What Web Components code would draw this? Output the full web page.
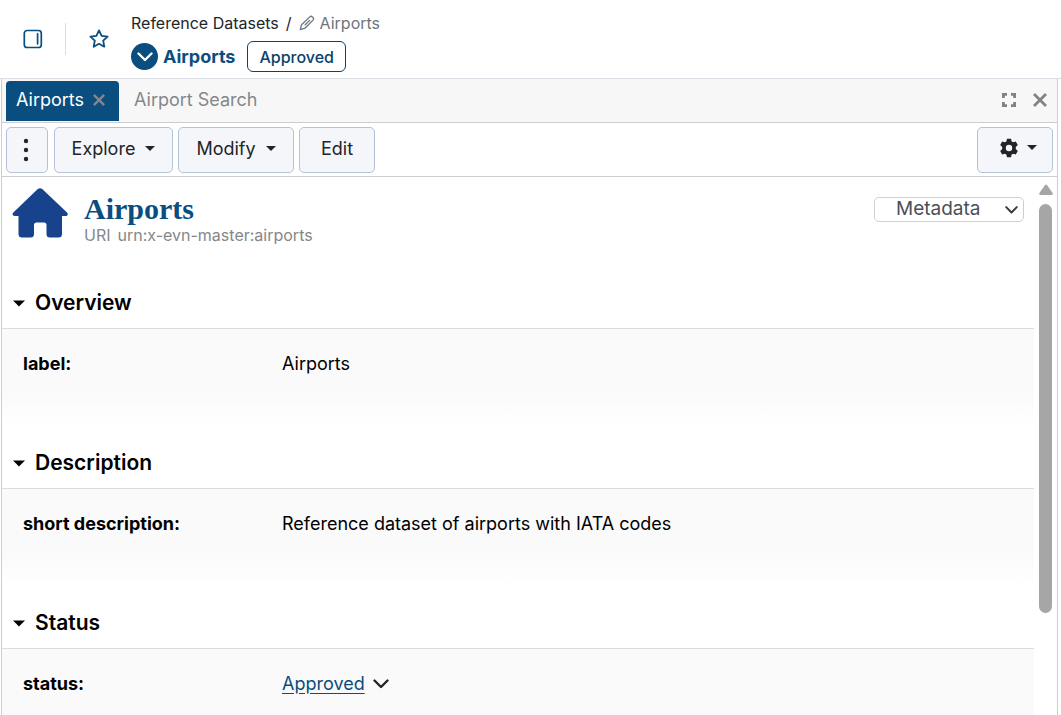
<!DOCTYPE html>
<html lang="en">
<head>
<meta charset="utf-8">
<meta name="viewport" content="width=device-width, initial-scale=1">
<title>Airports</title>
<style>
  html, body {
    height: 100%;
    margin: 0;
  }
  body {
    font-family: Inter, "Open Sans", sans-serif;
    color: #212529;
    background: white;
    overflow: hidden;
    --brand: #0a4d7f;
    --line: #ccced0;
  }
</style>
</head>
<body>
<asset-app></asset-app>

<script>
// Line and solid icons used across the page
const ICONS = {
  panel: '<svg viewBox="0 0 20 20" width="20" height="20" fill="none" stroke="currentColor" stroke-width="1.7"><rect x="1.3" y="1.5" width="17" height="17" rx="2.8"/><path d="M14.6 4.8v10" stroke-linecap="round"/></svg>',
  star: '<svg viewBox="0 0 20 20" width="20" height="20" fill="none" stroke="currentColor" stroke-width="1.8" stroke-linejoin="round"><path d="M10 1.4l2.6 5.4 6 .8-4.4 4.100 1.100 6L10 14.800l-5.300 2.900 1.100-6L1.400 7.600l6-.8z"/></svg>',
  pencil: '<svg viewBox="0 0 16 16" width="16" height="16" fill="none" stroke="currentColor" stroke-width="1.3" stroke-linejoin="round" stroke-linecap="round"><path d="M1.300 14.700l1.200-5L10.800 1.900q1.300-1.200 2.600 0l.6.6q1.200 1.200 0 2.600L6 13.200zM10.600 5.400L6.200 9.800"/></svg>',
  chevron: '<svg viewBox="0 0 16 10" width="16" height="10" fill="none" stroke="currentColor" stroke-width="2.4" stroke-linecap="round" stroke-linejoin="round"><path d="M1.500 1.500L8 8l6.500-6.500"/></svg>',
  caret: '<svg viewBox="0 0 10 5" width="10" height="5" fill="currentColor"><path d="M0 0h10L5 5z"/></svg>',
  close: '<svg viewBox="0 0 14 14" width="14" height="14" fill="none" stroke="currentColor" stroke-width="2.8"><path d="M1 1l12 12M13 1L1 13"/></svg>',
  expand: '<svg viewBox="0 0 14 14" width="14" height="14" fill="none" stroke="currentColor" stroke-width="2.800"><path d="M1.400 5V1.400H5M9 1.400h3.600V5M12.600 9v3.600H9M5 12.600H1.400V9"/></svg>',
  dots: '<svg viewBox="0 0 6 24" width="6" height="24" fill="currentColor"><circle cx="3" cy="3" r="2.200"/><circle cx="3" cy="12" r="2.200"/><circle cx="3" cy="21" r="2.200"/></svg>',
  gear: '<svg viewBox="0 0 24 24" width="22" height="22" fill="currentColor"><path fill-rule="evenodd" d="M9.800 2h4.400l.7 2.900 1.600.9 2.900-.9 2.200 3.800-2.200 2.100v2.400l2.200 2.100-2.200 3.800-2.900-.9-1.600.9-.7 2.900H9.800l-.7-2.900-1.600-.9-2.900.9-2.200-3.800 2.200-2.100v-2.400L2.400 8.700l2.200-3.800 2.900.9 1.600-.9zM12 8.500a3.500 3.500 0 1 0 0 7 3.500 3.500 0 0 0 0-7z"/></svg>',
  house: '<svg viewBox="0 0 56 50" width="56" height="50" fill="#17428c"><path d="M25.500 1.200q2.500-2 5 0L55 24.500q1.500 1.800.2 3-1 .8-2.700.5H50v18q0 3.500-3.500 3.500H38q-3.500 0-3.500-3.500v-9q0-2.500-2.500-2.500h-7.500q-2.500 0-2.500 2.500v9q0 3.500-3.500 3.500h-8.500Q6.500 49.500 6.500 46V28H3.500Q1 28 .6 26.500q-.3-1.200 1-2.300z"/></svg>'
};

// Shared reset for controls in each shadow root
const BASE = `
  * { box-sizing: border-box; }
  svg { display: block; flex: none; }
  button, select {
    font: inherit;
    color: inherit;
    margin: 0;
    padding: 0;
    border: 0;
    background: none;
    cursor: pointer;
  }
  a { color: inherit; text-decoration: none; }
`;

class AssetHeader extends HTMLElement {
  constructor() {
    super();
    this.attachShadow({ mode: 'open' });
  }

  connectedCallback() {
    this.shadowRoot.innerHTML = `
      <style>
        ${BASE}
        :host {
          display: flex;
          align-items: center;
          flex: none;
          height: 79px;
          padding-left: 23px;
          border-bottom: 1px solid #dadfe6;
          box-sizing: border-box;
          color: var(--brand);
          font-size: 16px;
          line-height: 20px;
        }
        .divider {
          width: 1px;
          height: 32px;
          margin: 0 23px 0 22px;
          background: #dcdfe2;
        }
        .titles {
          margin-left: 22px;
          padding-top: 7px;
        }
        .crumbs, .name {
          display: flex;
          align-items: center;
        }
        .crumbs {
          gap: 7px;
          color: #212529;
          margin-bottom: 8px;
        }
        .here {
          display: flex;
          align-items: center;
          gap: 5px;
          color: #6c757d;
        }
        .name strong {
          font-size: 18px;
          font-weight: 700;
          margin: 0 12px 0 5px;
        }
        .menu {
          display: grid;
          place-items: center;
          width: 27px;
          height: 27px;
          border-radius: 50%;
          color: white;
          background: var(--brand);
        }
        .status {
          height: 31px;
          padding: 0 11px;
          border: 1px solid #0b416b;
          border-radius: 6px;
          font-weight: 500;
          color: #0b416b;
        }
      </style>
      <button aria-label="Toggle panel">${ICONS.panel}</button>
      <div class="divider"></div>
      <button aria-label="Favorite">${ICONS.star}</button>
      <div class="titles">
        <nav class="crumbs">
          <a href="#datasets">Reference Datasets</a>
          <span>/</span>
          <span class="here">${ICONS.pencil}<span>Airports</span></span>
        </nav>
        <div class="name">
          <button class="menu" aria-label="Open menu">${ICONS.chevron}</button>
          <strong>Airports</strong>
          <button class="status">Approved</button>
        </div>
      </div>
    `;
  }
}

class PanelTabs extends HTMLElement {
  constructor() {
    super();
    this.attachShadow({ mode: 'open' });
  }

  connectedCallback() {
    this.shadowRoot.innerHTML = `
      <style>
        ${BASE}
        :host {
          display: flex;
          align-items: stretch;
          flex: none;
          height: 44px;
          padding: 2px 10px 1px 4px;
          border-bottom: 1px solid var(--line);
          box-sizing: border-box;
          background: #f7f7f7;
          color: #85878a;
          font-size: 18px;
          line-height: 24px;
        }
        .tab {
          display: flex;
          align-items: center;
          gap: 9px;
          padding: 0 14px 2px 10px;
          margin-right: 15px;
          border-radius: 4px 4px 0 0;
          background: var(--brand);
        }
        .tab > :first-child {
          color: white;
        }
        .tab svg {
          width: 12px;
          height: 12px;
        }
        .plain {
          padding-bottom: 2px;
        }
        .tools {
          display: flex;
          align-items: center;
          gap: 17px;
          margin-left: auto;
          padding-bottom: 2px;
          color: #808285;
        }
      </style>
      <div class="tab">
        <button>Airports</button>
        <button aria-label="Close tab">${ICONS.close}</button>
      </div>
      <button class="plain">Airport Search</button>
      <div class="tools">
        <button aria-label="Maximize">${ICONS.expand}</button>
        <button aria-label="Close panel">${ICONS.close}</button>
      </div>
    `;
  }
}

// Bordered toolbar button, with a caret when the "menu" attribute is set
class ToolButton extends HTMLElement {
  constructor() {
    super();
    this.attachShadow({ mode: 'open' });
  }

  connectedCallback() {
    const label = this.getAttribute('label');
    this.shadowRoot.innerHTML = `
      <style>
        ${BASE}
        :host {
          display: block;
        }
        button {
          display: flex;
          align-items: center;
          justify-content: center;
          gap: 10px;
          width: 100%;
          height: 46px;
          padding: 0 16px 2px;
          border: 1px solid #b4c0dc;
          border-radius: 5px;
          background: #f5f6fa;
          color: #212529;
          font-size: 18px;
        }
        :host([icon]) button {
          padding: 0 2px 0 0;
          gap: 7px;
        }
        :host([icon][menu]) button {
          padding: 0 0 4px 4px;
        }
      </style>
      <button ${label ? `aria-label="${label}"` : ''}>
        ${this.hasAttribute('icon') ? ICONS[this.getAttribute('icon')] : '<slot></slot>'}
        ${this.hasAttribute('menu') ? ICONS.caret : ''}
      </button>
    `;
  }
}

class PanelToolbar extends HTMLElement {
  constructor() {
    super();
    this.attachShadow({ mode: 'open' });
  }

  connectedCallback() {
    this.shadowRoot.innerHTML = `
      <style>
        :host {
          display: flex;
          align-items: center;
          gap: 5px;
          flex: none;
          height: 54px;
          padding: 0 4px;
          border-bottom: 1px solid var(--line);
          box-sizing: border-box;
        }
        .more { width: 42px; margin-right: 1px; }
        .explore { width: 119px; }
        .modify { width: 116px; }
        .edit { width: 76px; }
        .settings { width: 76px; margin-left: auto; }
      </style>
      <tool-button class="more" icon="dots" label="More"></tool-button>
      <tool-button class="explore" menu>Explore</tool-button>
      <tool-button class="modify" menu>Modify</tool-button>
      <tool-button class="edit">Edit</tool-button>
      <tool-button class="settings" icon="gear" label="Settings" menu></tool-button>
    `;
  }
}

class ResourceTitle extends HTMLElement {
  constructor() {
    super();
    this.attachShadow({ mode: 'open' });
  }

  connectedCallback() {
    this.shadowRoot.innerHTML = `
      <style>
        ${BASE}
        :host {
          display: flex;
          align-items: flex-start;
          height: 99px;
          padding: 11px 10px 0;
          box-sizing: border-box;
        }
        .text {
          margin: 4px 0 0 16px;
        }
        h1 {
          margin: 0;
          font-family: "Liberation Serif", serif;
          font-size: 30px;
          line-height: 33px;
          font-weight: 700;
          color: var(--brand);
        }
        p {
          display: flex;
          gap: 7px;
          margin: 0;
          font-size: 16px;
          line-height: 20px;
          color: #85878a;
        }
        .view {
          position: relative;
          display: flex;
          align-items: center;
          width: 150px;
          margin: 9px 0 0 auto;
        }
        select {
          appearance: none;
          width: 100%;
          height: 25px;
          padding: 0 30px 2px 21px;
          border: 1px solid #cbd0d8;
          border-radius: 5px;
          background: white;
          color: #495057;
          font-size: 19px;
          line-height: 22px;
        }
        .view svg {
          position: absolute;
          right: 6px;
          width: 13px;
          color: #343a40;
          pointer-events: none;
        }
      </style>
      ${ICONS.house}
      <div class="text">
        <h1>Airports</h1>
        <p><span>URI</span><span>urn:x-evn-master:airports</span></p>
      </div>
      <div class="view">
        <select aria-label="View">
          <option>Metadata</option>
        </select>
        ${ICONS.chevron}
      </div>
    `;
  }
}

class PropertySection extends HTMLElement {
  constructor() {
    super();
    this.attachShadow({ mode: 'open' });
  }

  connectedCallback() {
    this.shadowRoot.innerHTML = `
      <style>
        ${BASE}
        :host {
          display: block;
          font-size: 18px;
          line-height: 24px;
          color: black;
        }
        h2 {
          margin: 0;
          font-size: 21px;
          font-weight: 600;
        }
        h2 button {
          display: flex;
          align-items: center;
          gap: 10px;
          width: 100%;
          height: 52px;
          padding: 2px 0 0 11px;
        }
        h2 svg {
          width: 12px;
          height: 7px;
        }
        dl {
          display: grid;
          grid-template-columns: 259px 1fr;
          align-items: start;
          height: 108px;
          margin: 0;
          padding: 23px 21px 0;
          border-top: 1px solid #d9dbdd;
          background: linear-gradient(#fafafa 62%, white 92%);
        }
        dt {
          font-weight: 700;
        }
        dd {
          margin: 0;
        }
      </style>
      <h2><button aria-expanded="true">${ICONS.caret}${this.getAttribute('heading')}</button></h2>
      <dl>
        <dt>${this.getAttribute('property')}:</dt>
        <dd><slot></slot></dd>
      </dl>
    `;
  }
}

class StatusValue extends HTMLElement {
  constructor() {
    super();
    this.attachShadow({ mode: 'open' });
  }

  connectedCallback() {
    this.shadowRoot.innerHTML = `
      <style>
        ${BASE}
        :host {
          display: flex;
          align-items: center;
          gap: 8px;
        }
        a {
          color: var(--brand);
          text-decoration: underline;
          text-underline-offset: 3px;
        }
        button { color: #212529; }
      </style>
      <a href="#status"><slot></slot></a>
      <button aria-label="Change status">${ICONS.chevron}</button>
    `;
  }
}

class ScrollPane extends HTMLElement {
  constructor() {
    super();
    this.attachShadow({ mode: 'open' });
  }

  connectedCallback() {
    this.shadowRoot.innerHTML = `
      <style>
        :host {
          display: flex;
          flex: 1;
          min-height: 0;
        }
        .content {
          flex: 1;
          min-width: 0;
          overflow-y: auto;
          scrollbar-width: none;
        }
        .bar {
          display: flex;
          flex-direction: column;
          align-items: center;
          gap: 9px;
          flex: none;
          width: 23px;
          padding-top: 7px;
          box-sizing: border-box;
        }
        svg { display: block; flex: none; }
        .thumb {
          width: 13px;
          height: 77%;
          border-radius: 7px;
          background: #a6a6a6;
        }
      </style>
      <div class="content"><slot></slot></div>
      <div class="bar">
        <svg viewBox="0 0 14 11" width="14" height="11"><path d="M6 1q1-1.200 2 0l5.600 8q.6 2-1 2H1.400q-1.600 0-1-2z" fill="#a6a6a6"/></svg>
        <div class="thumb"></div>
      </div>
    `;
  }
}

class AssetApp extends HTMLElement {
  constructor() {
    super();
    this.attachShadow({ mode: 'open' });
  }

  connectedCallback() {
    this.shadowRoot.innerHTML = `
      <style>
        :host {
          display: flex;
          flex-direction: column;
          height: 100vh;
        }
        main {
          display: flex;
          flex-direction: column;
          flex: 1;
          min-height: 0;
          margin: 0 3px 0 1px;
          border: solid var(--line);
          border-width: 0 1px;
        }
      </style>
      <asset-header></asset-header>
      <main>
        <panel-tabs></panel-tabs>
        <panel-toolbar></panel-toolbar>
        <scroll-pane>
          <resource-title></resource-title>
          <property-section heading="Overview" property="label">Airports</property-section>
          <property-section heading="Description" property="short description">Reference dataset of airports with IATA codes</property-section>
          <property-section heading="Status" property="status"><status-value>Approved</status-value></property-section>
        </scroll-pane>
      </main>
    `;
  }
}

customElements.define('asset-header', AssetHeader);
customElements.define('panel-tabs', PanelTabs);
customElements.define('tool-button', ToolButton);
customElements.define('panel-toolbar', PanelToolbar);
customElements.define('resource-title', ResourceTitle);
customElements.define('property-section', PropertySection);
customElements.define('status-value', StatusValue);
customElements.define('scroll-pane', ScrollPane);
customElements.define('asset-app', AssetApp);
</script>
</body>
</html>
